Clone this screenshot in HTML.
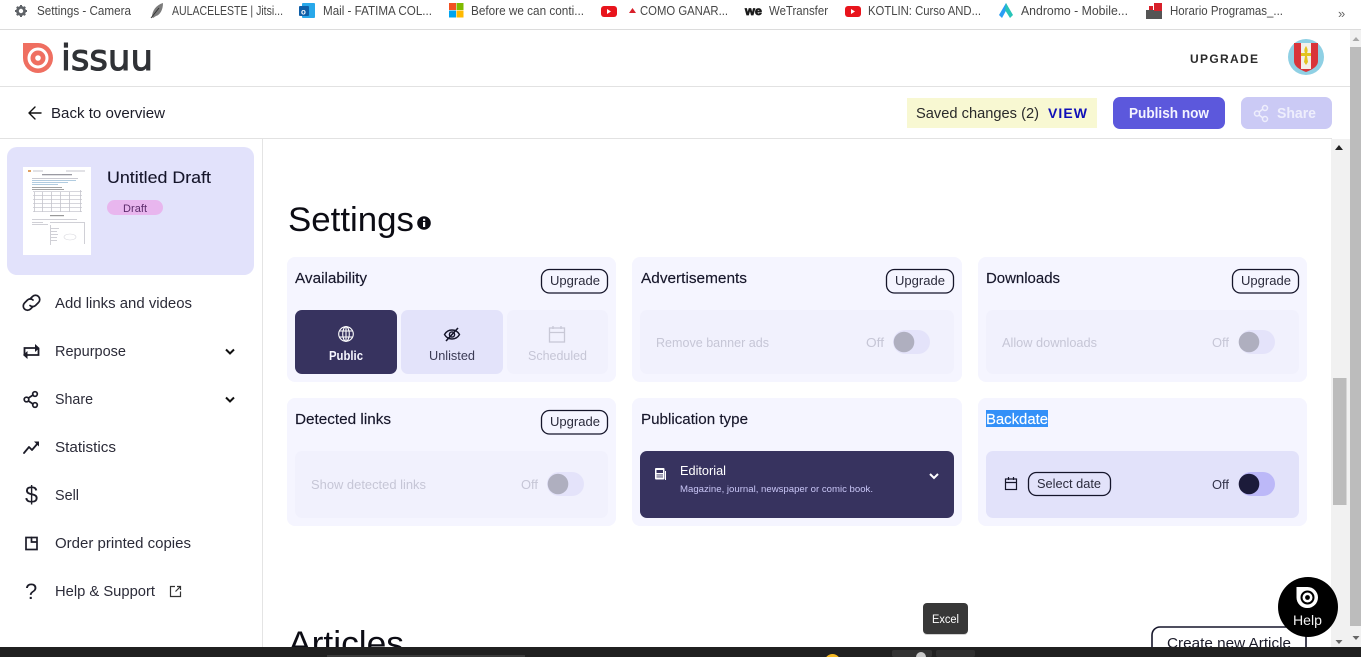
<!DOCTYPE html>
<html lang="en">
<head>
<meta charset="utf-8">
<title>Settings - issuu</title>
<style>
html,body{margin:0;padding:0;background:#fff;width:1361px;height:657px;overflow:hidden}
svg{display:block;font-family:"Liberation Sans",sans-serif}
text{white-space:pre}
.bm{font-size:12.5px;fill:#464646}
.nav{font-size:15px;fill:#2b2b38}
.title{font-size:15px;fill:#17172b;stroke:#17172b;stroke-width:.15}
.up{font-size:13px;fill:#2b2b3c}
.dis{font-size:12.5px;fill:#c6c6d6}
.ic{fill:none;stroke:#1c1c28;stroke-width:1.7;stroke-linecap:round;stroke-linejoin:round}
.btn{fill:none;stroke:#15152a;stroke-width:1.3}
</style>
</head>
<body>
<svg width="1361" height="657" viewBox="0 0 1361 657" xmlns="http://www.w3.org/2000/svg">
<rect width="1361" height="657" fill="#fff"/>

<!-- bookmarks bar -->
<rect x="0" y="29" width="1361" height="1" fill="#dcdcdc"/>
<g fill="none" stroke="#5f6368"><circle cx="21" cy="11" r="3.600" stroke-width="2.800"/><path d="M21 5v2M21 15v2M15 11h2M25 11h2M16.800 6.800l1.400 1.400M23.800 13.800l1.400 1.400M16.800 15.200l1.400-1.400M23.800 8.200l1.400-1.400" stroke-width="2"/></g>
<text class="bm" x="37" y="15" textLength="94" lengthAdjust="spacingAndGlyphs">Settings - Camera</text>
<path d="M152 17c0-6 4-12 11-14 0 7-3 12-7 13l-3 2z" fill="#7c7c7c"/><path d="M151 18l8-10" stroke="#333" stroke-width="1"/>
<text class="bm" x="172" y="15" textLength="111" lengthAdjust="spacingAndGlyphs">AULACELESTE | Jitsi...</text>
<rect x="302" y="3" width="13" height="15" rx="1" fill="#28a8ea"/><rect x="299" y="6" width="10" height="10" rx="1" fill="#0f5fa8"/><text x="301" y="14.500" font-size="8" font-weight="700" fill="#fff">o</text>
<text class="bm" x="323" y="15" textLength="109" lengthAdjust="spacingAndGlyphs">Mail - FATIMA COL...</text>
<rect x="449" y="3" width="7" height="7" fill="#f25022"/><rect x="456.500" y="3" width="7" height="7" fill="#7fba00"/><rect x="449" y="10.500" width="7" height="7" fill="#00a4ef"/><rect x="456.500" y="10.500" width="7" height="7" fill="#ffb900"/>
<text class="bm" x="471" y="15" textLength="113" lengthAdjust="spacingAndGlyphs">Before we can conti...</text>
<rect x="601" y="6" width="16" height="11" rx="3" fill="#e8141c"/><path d="M607 9l4 2.500-4 2.500z" fill="#fff"/>
<path d="M632.500 8l3.500 5h-7z" fill="#d8202a"/>
<text class="bm" x="640" y="15" textLength="88" lengthAdjust="spacingAndGlyphs">COMO GANAR...</text>
<text x="745" y="15" font-size="12" font-weight="700" fill="#1a1a1a" textLength="17" lengthAdjust="spacingAndGlyphs" stroke="#1a1a1a" stroke-width=".7">we</text>
<text class="bm" x="769" y="15" textLength="59" lengthAdjust="spacingAndGlyphs">WeTransfer</text>
<rect x="845" y="6" width="16" height="11" rx="3" fill="#e8141c"/><path d="M851 9l4 2.500-4 2.500z" fill="#fff"/>
<text class="bm" x="868" y="15" textLength="113" lengthAdjust="spacingAndGlyphs">KOTLIN: Curso AND...</text>
<path d="M1006 3l-7 12 3 3 6-11z" fill="#2a9df4"/><path d="M1006 3l7 12-3 3-5-8z" fill="#27c4b8"/>
<text class="bm" x="1021" y="15" textLength="107" lengthAdjust="spacingAndGlyphs">Andromo - Mobile...</text>
<rect x="1146" y="10" width="16" height="9" fill="#555"/><rect x="1154" y="3" width="8" height="8" fill="#d8202a"/><rect x="1149" y="6" width="4" height="4" fill="#d8202a"/>
<text class="bm" x="1170" y="15" textLength="113" lengthAdjust="spacingAndGlyphs">Horario Programas_...</text>
<text x="1338" y="18" font-size="13" fill="#666">»</text>

<!-- header -->
<path d="M23 43h15a15 15 0 0 1 0 30 15 15 0 0 1-15-15z" fill="#ef6f61"/>
<circle cx="38" cy="58" r="9" fill="none" stroke="#fff" stroke-width="3"/>
<circle cx="38" cy="58" r="2.800" fill="#fff"/>
<text x="61" y="70" font-family="DejaVu Sans" font-size="36" fill="#303236" stroke="#303236" stroke-width="1" textLength="92" lengthAdjust="spacingAndGlyphs">issuu</text>
<text x="1190" y="63" font-size="12" font-weight="700" fill="#2b2b2b" textLength="68" lengthAdjust="spacing">UPGRADE</text>
<circle cx="1306" cy="57" r="18" fill="#8fd0e4"/>
<path d="M1294 43h24v18c0 6-7 9-12 11-5-2-12-5-12-11z" fill="#d9353a"/>
<rect x="1301" y="43" width="10" height="26" fill="#f3f0ea"/>
<path d="M1306 46c-2 3-2 5-1 7h-4v3h4l-1 6 2 3 2-3-1-6h4v-3h-4c1-2 1-4-1-7z" fill="#e3c320"/>
<rect x="0" y="86" width="1350" height="1" fill="#e2e2e2"/>

<!-- action bar -->
<path d="M41 113H29M35 107l-6 6 6 6" fill="none" stroke="#111" stroke-width="1.400" stroke-linecap="round" stroke-linejoin="round"/>
<text x="51" y="118" font-size="15" fill="#1c1c28" textLength="114" lengthAdjust="spacingAndGlyphs">Back to overview</text>
<rect x="907" y="98" width="190" height="30" fill="#f8f8d2"/>
<text x="916" y="118" font-size="15" fill="#2a2a2a" textLength="123" lengthAdjust="spacingAndGlyphs">Saved changes (2)</text>
<text x="1048" y="118" font-size="14" font-weight="700" fill="#1010b8" textLength="39" lengthAdjust="spacing">VIEW</text>
<rect x="1113" y="97" width="112" height="32" rx="7" fill="#5c58dc"/>
<text x="1129" y="118" font-size="15" font-weight="700" fill="#f4f4ff" textLength="80" lengthAdjust="spacingAndGlyphs">Publish now</text>
<rect x="1241" y="97" width="91" height="32" rx="7" fill="#cbcaf5"/>
<g fill="none" stroke="#eeeefc" stroke-width="1.500"><circle cx="1257" cy="113.500" r="2.500"/><circle cx="1265" cy="108" r="2.500"/><circle cx="1265" cy="119" r="2.500"/><path d="M1259 112l4-3M1259 115l4 3"/></g>
<text x="1277" y="118" font-size="15" font-weight="700" fill="#eeeefc" textLength="39" lengthAdjust="spacingAndGlyphs">Share</text>
<rect x="0" y="138" width="1332" height="1" fill="#e2e2e2"/>

<!-- sidebar -->
<rect x="262" y="139" width="1" height="508" fill="#e4e4e4"/>
<rect x="7" y="147" width="247" height="128" rx="10" fill="#e2e2fb"/>
<rect x="23" y="167" width="68" height="88" fill="#fff"/>
<g fill="#c4c4cc" style="filter:blur(.3px)">
<rect x="28" y="170" width="3" height="2" fill="#e0a060"/><rect x="33" y="170.500" width="10" height="1"/><rect x="66" y="170.500" width="19" height="1"/>
<rect x="42" y="174" width="30" height="1.300" fill="#9a9aa2"/>
<rect x="32" y="178" width="46" height=".9"/><rect x="32" y="180" width="44" height=".9" fill="#a9c6dc"/><rect x="32" y="182" width="36" height=".9" fill="#a9c6dc"/><rect x="32" y="184" width="26" height=".9" fill="#a9c6dc"/>
<rect x="32" y="187" width="30" height=".9" fill="#999"/><rect x="32" y="189" width="32" height=".9" fill="#999"/>
<rect x="33" y="191" width="49" height=".7"/><rect x="33" y="195" width="49" height=".7"/><rect x="33" y="199" width="49" height=".7"/><rect x="33" y="203" width="49" height=".7"/><rect x="33" y="207" width="49" height=".7"/><rect x="33" y="211" width="49" height=".7"/>
<rect x="34" y="192" width=".8" height="20"/><rect x="42" y="192" width=".8" height="20"/><rect x="51" y="192" width=".8" height="20"/><rect x="60" y="192" width=".8" height="20"/><rect x="69" y="192" width=".8" height="20"/><rect x="80" y="190" width=".8" height="22"/>
<rect x="50" y="215" width="14" height="1.200" fill="#999"/>
<rect x="32" y="219" width="45" height=".8"/><rect x="32" y="222" width="11" height=".8"/><rect x="50" y="222" width="34" height=".8"/>
<rect x="32" y="224" width="16" height=".8"/><rect x="50" y="225" width=".8" height="20"/><rect x="84" y="222" width=".8" height="22"/>
<rect x="51" y="228" width="8" height=".8"/><rect x="51" y="231" width="6" height=".8"/><rect x="51" y="234" width="7" height=".8"/><rect x="51" y="237" width="6" height=".8"/><rect x="51" y="240" width="6" height=".8"/>
</g>
<ellipse cx="70" cy="237" rx="6" ry="3" fill="none" stroke="#d8d8de" stroke-width=".6"/>
<text x="107" y="183" font-size="17" fill="#15152a" stroke="#15152a" stroke-width=".1" textLength="104" lengthAdjust="spacingAndGlyphs">Untitled Draft</text>
<rect x="107" y="200" width="56" height="15" rx="7.500" fill="#e8b6ee"/>
<text x="123" y="212" font-size="11" fill="#5c2c6c" textLength="24" lengthAdjust="spacing">Draft</text>

<g class="ic" stroke-width="1.500">
<path d="M30 299l2.500-2.500a4 4 0 0 1 6 6l-3 3a4 4 0 0 1-5.500 0"/><path d="M33 306.500l-2.500 2.500a4 4 0 0 1-6-6l3-3a4 4 0 0 1 5.500 0"/>
<circle cx="26.500" cy="399.500" r="2.300"/><circle cx="35" cy="394" r="2.300"/><circle cx="35" cy="405" r="2.300"/><path d="M28.500 398l4.500-3M28.500 401l4.500 3"/>
<path d="M24 453l5-6 3 3 6-7" stroke-width="1.800"/>
<rect x="26" y="537.500" width="11" height="12" stroke-linejoin="miter"/><path d="M31.500 537.500v4.500h4.500" stroke-linejoin="miter"/>
</g>
<path d="M24.500 355v-7H36M38.500 348v7H26" fill="none" stroke="#1c1c28" stroke-width="1.800"/>
<path d="M35 344l4.500 4-4.500 4zM27.500 351l-4.500 4 4.500 4z" fill="#1c1c28"/>
<path d="M34 441.500h5v5z" fill="#1c1c28"/>
<text x="25" y="503" font-size="24" fill="#1c1c28" textLength="13" lengthAdjust="spacingAndGlyphs">$</text>
<text x="25" y="599" font-size="22" fill="#1c1c28">?</text>
<text class="nav" x="55" y="308" textLength="137" lengthAdjust="spacingAndGlyphs">Add links and videos</text>
<text class="nav" x="55" y="356" textLength="71" lengthAdjust="spacingAndGlyphs">Repurpose</text>
<text class="nav" x="55" y="404" textLength="38" lengthAdjust="spacingAndGlyphs">Share</text>
<text class="nav" x="55" y="452" textLength="61" lengthAdjust="spacingAndGlyphs">Statistics</text>
<text class="nav" x="55" y="500" textLength="24" lengthAdjust="spacingAndGlyphs">Sell</text>
<text class="nav" x="55" y="548" textLength="136" lengthAdjust="spacingAndGlyphs">Order printed copies</text>
<text class="nav" x="55" y="596" textLength="100" lengthAdjust="spacingAndGlyphs">Help &amp; Support</text>
<path d="M226 349.500l4 4 4-4M226 397.500l4 4 4-4" fill="none" stroke="#111" stroke-width="2"/>
<path d="M175 586.500h-4.500v10h10v-5M175.500 591.500l4.500-4.500M177 586.500h3.500v3.500" fill="none" stroke="#333" stroke-width="1.200"/>

<!-- main -->
<text x="288" y="231" font-size="34" fill="#0c0c14" textLength="126" lengthAdjust="spacingAndGlyphs">Settings</text>
<circle cx="424" cy="223" r="6.800" fill="#0c0c14"/>
<rect x="423" y="222" width="2.200" height="5" fill="#fff"/><rect x="423" y="218.800" width="2.200" height="2" fill="#fff"/>

<!-- cards -->
<g fill="#f5f5ff">
<rect x="287" y="257" width="329" height="125" rx="8"/>
<rect x="632" y="257" width="330" height="125" rx="8"/>
<rect x="978" y="257" width="329" height="125" rx="8"/>
<rect x="287" y="398" width="329" height="128" rx="8"/>
<rect x="632" y="398" width="330" height="128" rx="8"/>
<rect x="978" y="398" width="329" height="128" rx="8"/>
</g>
<text class="title" x="295" y="283" textLength="72" lengthAdjust="spacingAndGlyphs">Availability</text>
<text class="title" x="641" y="283" textLength="106" lengthAdjust="spacingAndGlyphs">Advertisements</text>
<text class="title" x="986" y="283" textLength="74" lengthAdjust="spacingAndGlyphs">Downloads</text>
<text class="title" x="295" y="424" textLength="96" lengthAdjust="spacingAndGlyphs">Detected links</text>
<text class="title" x="641" y="424" textLength="107" lengthAdjust="spacingAndGlyphs">Publication type</text>
<rect x="986" y="410" width="62" height="17" fill="#3390f8"/>
<text x="986" y="424" font-size="15" fill="#fff" stroke="#fff" stroke-width=".15" textLength="62" lengthAdjust="spacingAndGlyphs">Backdate</text>

<!-- upgrade buttons -->
<rect class="btn" x="541.500" y="269.500" width="66" height="23.500" rx="8"/>
<rect class="btn" x="886.500" y="269.500" width="67" height="23.500" rx="8"/>
<rect class="btn" x="1232.500" y="269.500" width="66" height="23.500" rx="8"/>
<rect class="btn" x="541.500" y="410.500" width="66" height="23.500" rx="8"/>
<text class="up" x="550" y="285" textLength="50" lengthAdjust="spacingAndGlyphs">Upgrade</text>
<text class="up" x="895" y="285" textLength="50" lengthAdjust="spacingAndGlyphs">Upgrade</text>
<text class="up" x="1241" y="285" textLength="50" lengthAdjust="spacingAndGlyphs">Upgrade</text>
<text class="up" x="550" y="426" textLength="50" lengthAdjust="spacingAndGlyphs">Upgrade</text>

<!-- availability -->
<rect x="295" y="310" width="102" height="64" rx="7" fill="#37335f"/>
<rect x="401" y="310" width="102" height="64" rx="7" fill="#e3e3fa"/>
<rect x="507" y="310" width="101" height="64" rx="7" fill="#f1f1fd"/>
<g fill="none" stroke="#fff" stroke-width="1.100"><circle cx="346" cy="334" r="7.300"/><ellipse cx="346" cy="334" rx="3.300" ry="7.300"/><path d="M339 331h14M339 337h14M346 327v14"/></g>
<text x="329" y="360" font-size="12.500" font-weight="700" fill="#f6f6ff" textLength="34" lengthAdjust="spacingAndGlyphs">Public</text>
<g fill="none" stroke="#15152a" stroke-width="1.400"><path d="M444.500 334.500c3.500-6 11.500-6 15 0-3.500 6-11.500 6-15 0z"/><circle cx="452" cy="334.500" r="2.600"/><path d="M446 341l12-13" stroke-width="1.600"/></g>
<text x="429" y="360" font-size="12.500" fill="#3b3b55" textLength="46" lengthAdjust="spacingAndGlyphs">Unlisted</text>
<g fill="none" stroke="#c8c8d6" stroke-width="1.300"><rect x="549.500" y="328" width="15" height="14"/><path d="M549.500 332.500h15M553 326v3M561 326v3"/></g>
<text x="528" y="360" font-size="12.500" fill="#c6c6d6" textLength="59" lengthAdjust="spacingAndGlyphs">Scheduled</text>

<!-- advert -->
<rect x="640" y="310" width="314" height="64" rx="7" fill="#f1f1fd"/>
<text class="dis" x="656" y="347" textLength="113" lengthAdjust="spacingAndGlyphs">Remove banner ads</text>
<text class="dis" x="866" y="347" textLength="18" lengthAdjust="spacingAndGlyphs">Off</text>
<rect x="893" y="330" width="37" height="24" rx="12" fill="#e4e3fa"/>
<circle cx="904" cy="342" r="10.300" fill="#afafbf"/>

<!-- downloads -->
<rect x="986" y="310" width="313" height="64" rx="7" fill="#f1f1fd"/>
<text class="dis" x="1002" y="347" textLength="95" lengthAdjust="spacingAndGlyphs">Allow downloads</text>
<text class="dis" x="1212" y="347" textLength="17" lengthAdjust="spacingAndGlyphs">Off</text>
<rect x="1239" y="330" width="36" height="24" rx="12" fill="#e4e3fa"/>
<circle cx="1249" cy="342" r="10.300" fill="#afafbf"/>

<!-- detected -->
<rect x="295" y="451" width="313" height="67" rx="7" fill="#f1f1fd"/>
<text class="dis" x="311" y="489" textLength="115" lengthAdjust="spacingAndGlyphs">Show detected links</text>
<text class="dis" x="521" y="489" textLength="17" lengthAdjust="spacingAndGlyphs">Off</text>
<rect x="547" y="472" width="37" height="24" rx="12" fill="#e4e3fa"/>
<circle cx="558" cy="484" r="10.300" fill="#afafbf"/>

<!-- publication type -->
<rect x="640" y="451" width="314" height="67" rx="7" fill="#37335f"/>
<rect x="655" y="468" width="9.500" height="11.500" rx="1" fill="#fff"/>
<rect x="665" y="471" width="1" height="9" fill="#fff"/>
<rect x="656.500" y="470" width="6.500" height="3" fill="#37335f"/><rect x="656.500" y="474.500" width="6.500" height=".9" fill="#37335f"/><rect x="656.500" y="476.500" width="6.500" height=".9" fill="#37335f"/>
<text x="680" y="475" font-size="12.500" fill="#fff" textLength="46" lengthAdjust="spacingAndGlyphs">Editorial</text>
<text x="680" y="492" font-size="9.500" fill="#c9c6f6" textLength="193" lengthAdjust="spacingAndGlyphs">Magazine, journal, newspaper or comic book.</text>
<path d="M930 474l4 4 4-4" fill="none" stroke="#fff" stroke-width="2"/>

<!-- backdate -->
<rect x="986" y="451" width="313" height="67" rx="7" fill="#e2e2fa"/>
<g fill="none" stroke="#15152a" stroke-width="1.200"><rect x="1005.500" y="479" width="11" height="10.500"/><path d="M1005.500 482.500h11M1008.500 477v3M1013.500 477v3"/></g>
<rect class="btn" x="1028.500" y="472.500" width="82" height="23" rx="8"/>
<text x="1037" y="488" font-size="13" fill="#2b2b3c" textLength="64" lengthAdjust="spacingAndGlyphs">Select date</text>
<text x="1212" y="489" font-size="12.500" fill="#33334a" textLength="17" lengthAdjust="spacingAndGlyphs">Off</text>
<rect x="1239" y="472" width="36" height="24" rx="12" fill="#bcb8f8"/>
<circle cx="1249" cy="484" r="10.300" fill="#1c1b3a"/>

<!-- articles -->
<text x="288" y="655" font-size="34" fill="#0c0c14" textLength="116" lengthAdjust="spacingAndGlyphs">Articles</text>
<rect x="1152" y="627" width="154" height="40" rx="8" fill="#fff" stroke="#15152a" stroke-width="1.600"/>
<text x="1167" y="648" font-size="15" fill="#1a1a28" textLength="124" lengthAdjust="spacingAndGlyphs">Create new Article</text>

<!-- scrollbars -->
<rect x="1331" y="139" width="19" height="508" fill="#f1f1f1"/>
<rect x="1350" y="30" width="11" height="617" fill="#f1f1f1"/>
<rect x="1333" y="378" width="13.500" height="127" fill="#bcbcbc"/>
<rect x="1350" y="47" width="11" height="579" fill="#bcbcbc"/>
<path d="M1339 145l4 5h-8z" fill="#222"/>
<path d="M1356 37l3.500 4h-7z" fill="#a8a8a8"/>
<path d="M1339 644l-3.500-4h7z" fill="#666"/>
<path d="M1356 640l-3.500-4h7z" fill="#666"/>

<!-- help -->
<circle cx="1308" cy="607" r="30" fill="#000"/>
<path d="M1296.500 587h11a10.500 10.500 0 0 1 0 21 10.500 10.500 0 0 1-11-10.500z" fill="#fff"/>
<circle cx="1307.500" cy="597.500" r="6" fill="none" stroke="#000" stroke-width="2"/>
<circle cx="1307.500" cy="597.500" r="2.400" fill="#000"/>
<text x="1293" y="625" font-size="13.500" fill="#f2f2f2" textLength="29" lengthAdjust="spacingAndGlyphs">Help</text>

<!-- tooltip -->
<rect x="923" y="604" width="45" height="31" rx="4" fill="#000" opacity=".18"/>
<rect x="923" y="603" width="45" height="31" rx="4" fill="#383838"/>
<text x="932" y="623" font-size="11.500" fill="#fff" textLength="27" lengthAdjust="spacingAndGlyphs">Excel</text>

<!-- taskbar -->
<rect x="0" y="647" width="1361" height="10" fill="#202020"/>
<rect x="327" y="655" width="198" height="2" fill="#3a3a3a"/>
<circle cx="832.500" cy="662" r="8" fill="#f5b820"/>
<rect x="892" y="650" width="40" height="7" rx="2" fill="#333"/>
<rect x="936" y="650" width="39" height="7" rx="2" fill="#2f2f2f"/>
<circle cx="921" cy="657" r="5" fill="#c9c9c9"/>
</svg>
</body>
</html>
